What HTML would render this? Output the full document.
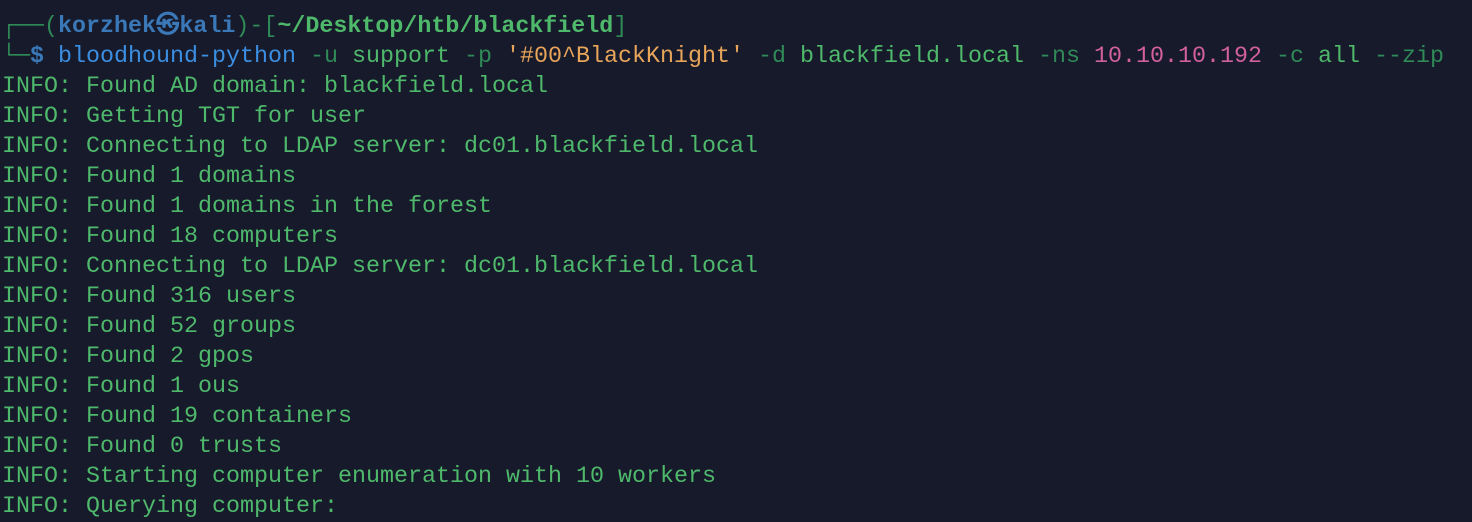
<!DOCTYPE html>
<html><head><meta charset="utf-8"><style>
html,body{margin:0;padding:0;background:#161a2b;width:1472px;height:516px;overflow:hidden}
pre{margin:0;position:absolute;left:2px;top:12px;font-family:"Liberation Mono","DejaVu Sans Mono",monospace;font-size:23.33px;line-height:30px;color:#4fb96b;white-space:pre}
.d{color:#2f8a57}.u{color:#3a78b8;font-weight:bold}.p{color:#4fb96b;font-weight:bold}
.c{color:#3b8ee0}.o{color:#e8a55a}.n{color:#d1609b}.dl{color:#3a78b8;font-weight:bold}
</style></head><body><pre><span class="d">┌──(</span><span class="u">korzhek㉿kali</span><span class="d">)-[</span><span class="p">~/Desktop/htb/blackfield</span><span class="d">]</span>
<span class="d">└─</span><span class="dl">$</span> <span class="c">bloodhound-python</span> <span class="d">-u</span> support <span class="d">-p</span> <span class="o">'#00^BlackKnight'</span> <span class="d">-d</span> blackfield.local <span class="d">-ns</span> <span class="n">10.10.10.192</span> <span class="d">-c</span> all <span class="d">--zip</span>
INFO: Found AD domain: blackfield.local
INFO: Getting TGT for user
INFO: Connecting to LDAP server: dc01.blackfield.local
INFO: Found 1 domains
INFO: Found 1 domains in the forest
INFO: Found 18 computers
INFO: Connecting to LDAP server: dc01.blackfield.local
INFO: Found 316 users
INFO: Found 52 groups
INFO: Found 2 gpos
INFO: Found 1 ous
INFO: Found 19 containers
INFO: Found 0 trusts
INFO: Starting computer enumeration with 10 workers
INFO: Querying computer: </pre></body></html>
